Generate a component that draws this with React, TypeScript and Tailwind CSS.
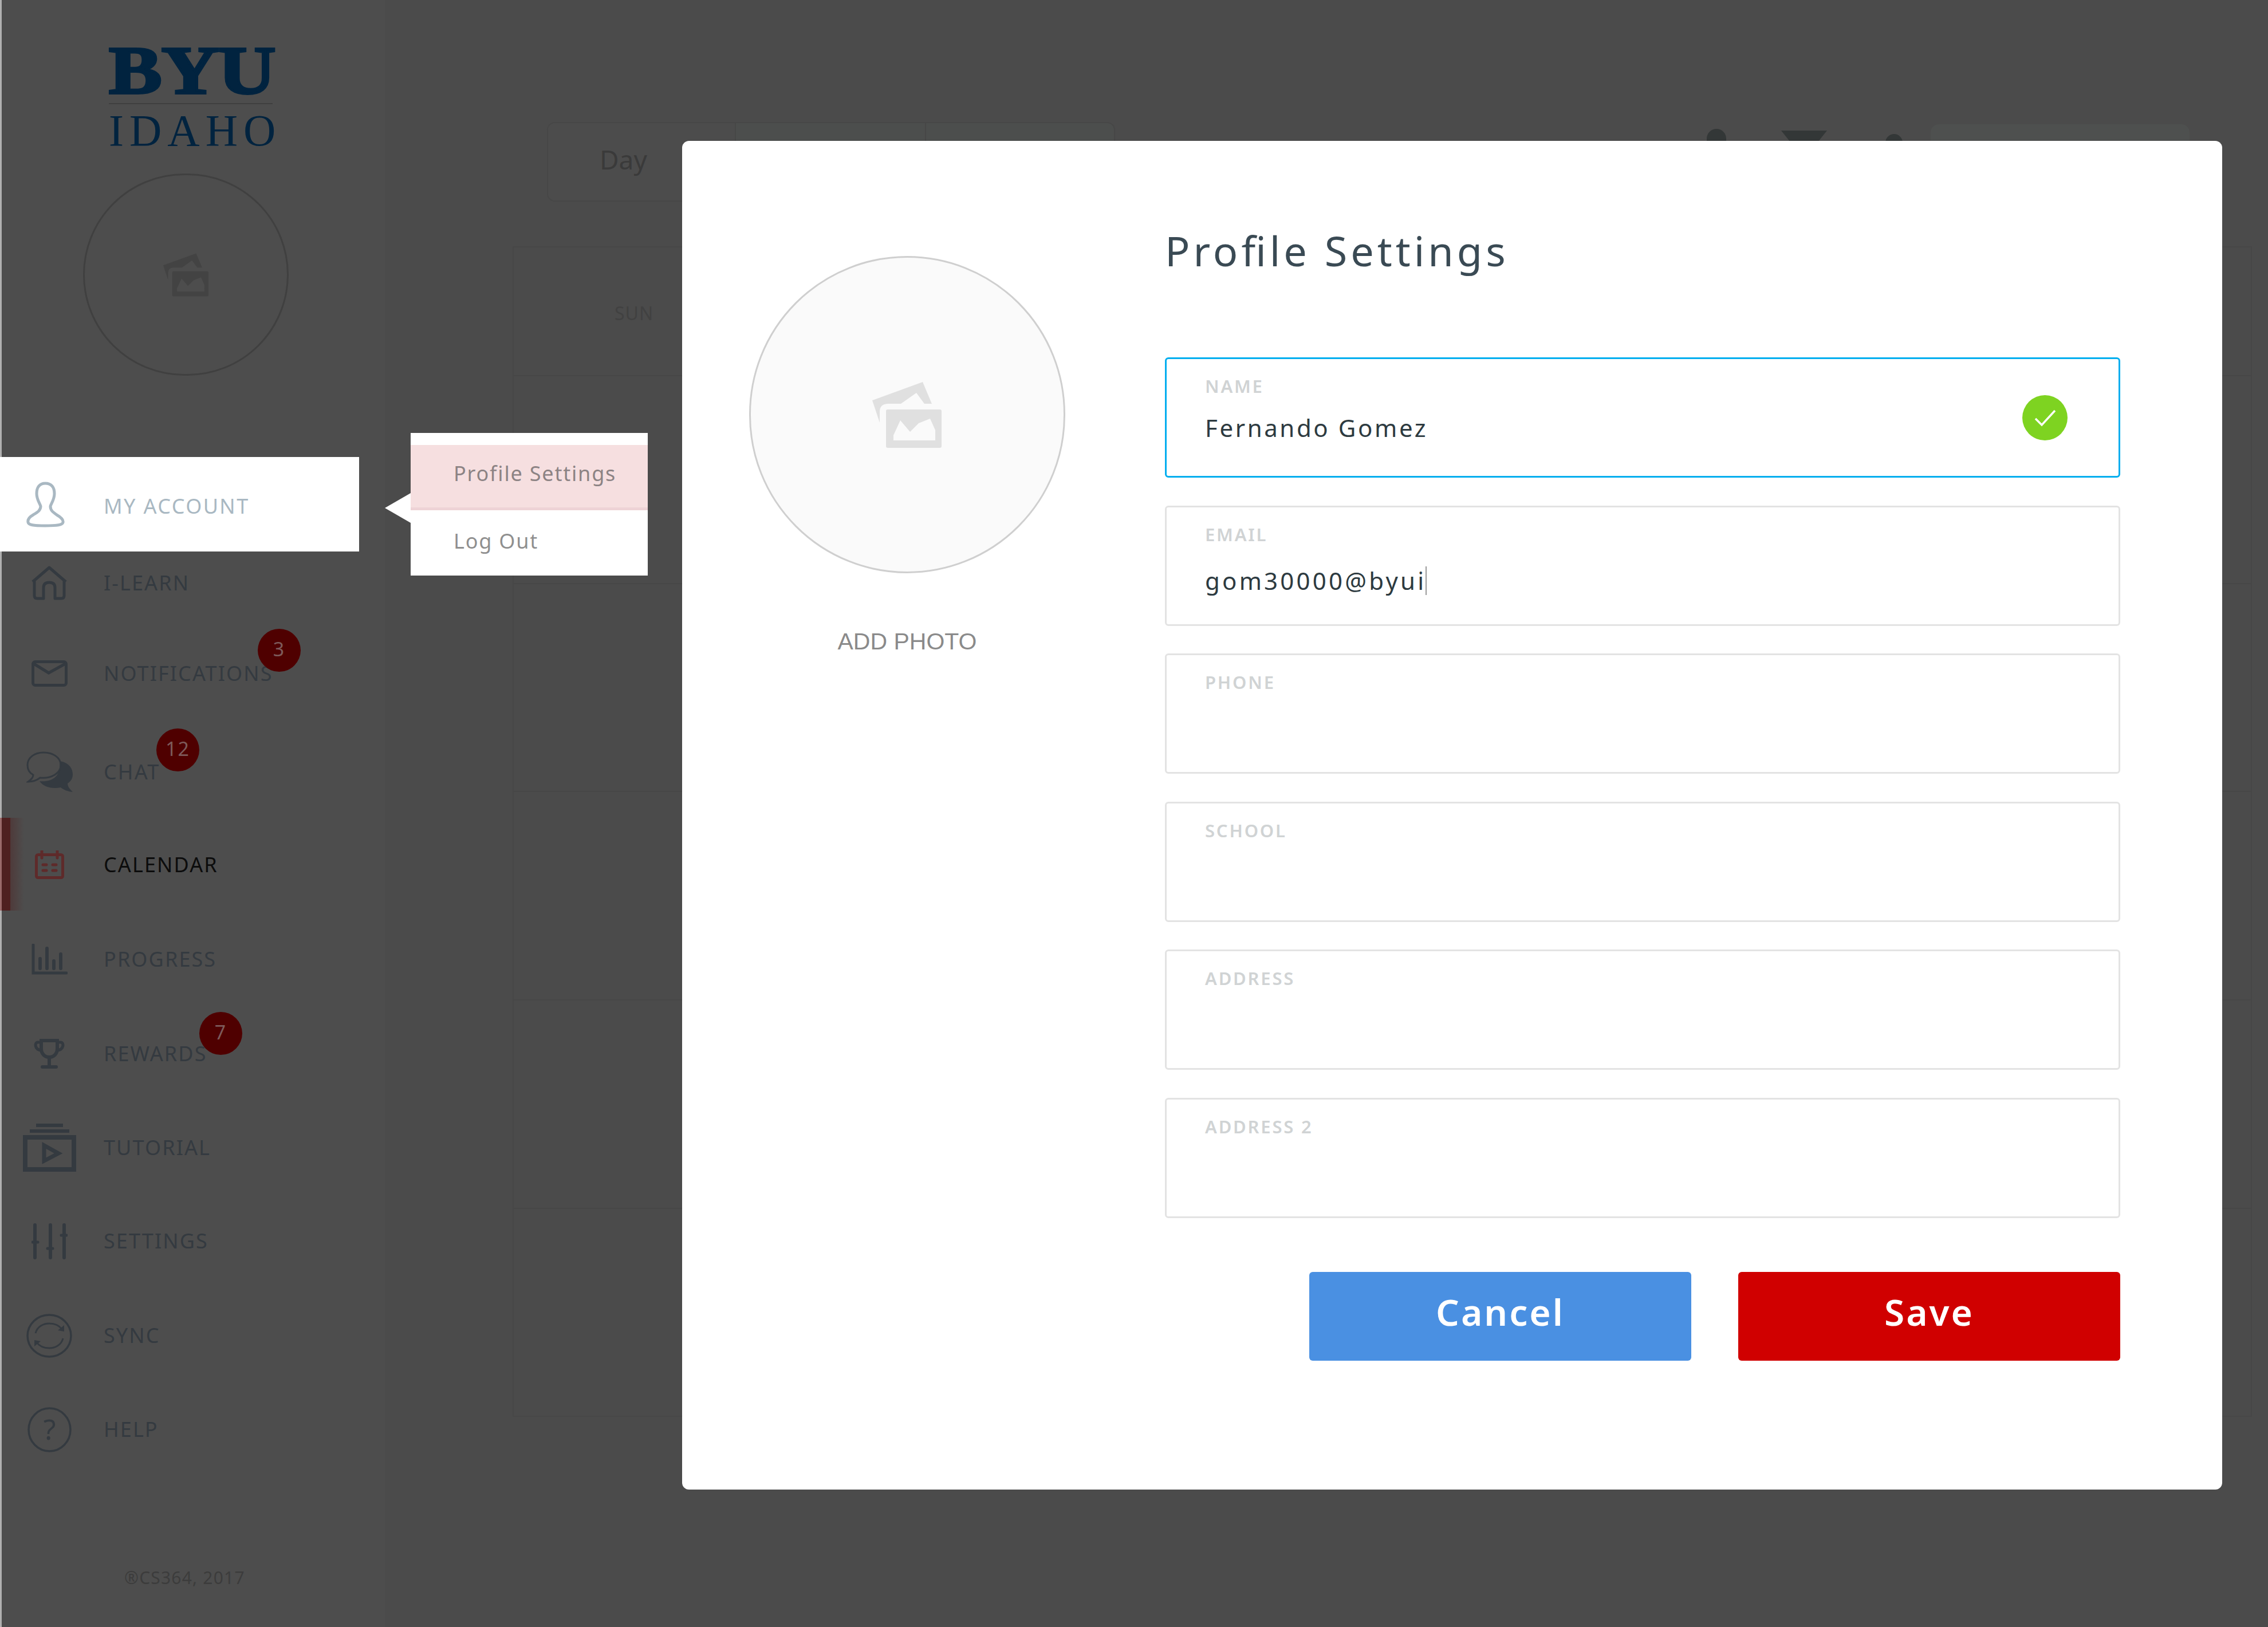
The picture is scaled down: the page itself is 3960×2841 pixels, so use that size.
import React from 'react';

const sans = "font-['Noto_Sans',sans-serif]";

const PhotoIcon: React.FC<{ className: string; hole: string }> = ({ className, hole }) => (
  <svg viewBox="0 0 121 115" className={className}>
    <path fill="currentColor" d="M0 32 L88 0 L104 38 L91 38 L77 19 L50 38 L28 38 Q13 38 13 52 L13 71 Z" />
    <rect fill="currentColor" x="24" y="48" width="97" height="67" rx="3" />
    <path fill={hole} d="M37 102 L37 93 L49 67 L66 87 L81 72 L101 64 L110 84 L110 102 Z" />
  </svg>
);

const UserIcon = () => (
  <svg viewBox="0 0 67 80" className="w-[67px] h-[80px] text-[#a9b8c2]" fill="none" stroke="currentColor" strokeWidth="5">
    <path d="M33 3 C23 3 18 10 18 21 C18 31 23 37 25 43 C25 50 20 53 12 58 C5 62 2 66 3 71 C4 76 12 77 33 77 C54 77 63 76 64 71 C65 66 60 62 53 58 C46 53 42 50 42 43 C44 37 49 31 49 21 C49 10 44 3 33 3 Z" />
  </svg>
);

const HomeIcon = () => (
  <svg viewBox="0 0 64 60" className="w-[64px] h-[60px] text-[#343a40]" fill="none" stroke="currentColor" strokeWidth="5" strokeLinejoin="round">
    <path d="M3 28 L32 3 L61 28 M6 27 L6 52 Q6 57 11 57 L22 57 L22 38 Q22 29 32 29 Q42 29 42 38 L42 57 L53 57 Q58 57 58 52 L58 27" />
  </svg>
);

const MailIcon = () => (
  <svg viewBox="0 0 63 46" className="w-[63px] h-[46px] text-[#343a40]" fill="none" stroke="currentColor" strokeWidth="5">
    <rect x="2.5" y="2.5" width="58" height="41" rx="4" />
    <path d="M4 6 L30 22 L59 6" />
  </svg>
);

const ChatIcon = () => (
  <svg viewBox="0 0 81 72" className="w-[81px] h-[72px] text-[#343a40]">
    <path fill="currentColor" d="M58 17 C72 19 81 28 81 40 C81 47 78 52 72 56 C72 61 75 65 81 71 C72 70 65 67 60 63 C44 66 30 62 23 52 C42 54 62 46 58 17 Z" />
    <path fill="none" stroke="currentColor" strokeWidth="3" d="M30 2 C14 2 2 11 2 24 C2 32 6 38 12 41 C12 45 9 49 3 53 C12 53 19 50 24 46 C44 48 60 38 60 24 C60 11 47 2 30 2 Z" />
  </svg>
);

const CalendarIcon = () => (
  <svg viewBox="0 0 51 50" className="w-[51px] h-[50px] text-[#5e2a2a]" fill="none" stroke="currentColor">
    <rect x="2.5" y="7.5" width="46" height="40" rx="3" strokeWidth="5" />
    <path d="M12 1 L12 13 M39 1 L39 13" strokeWidth="5" strokeLinecap="round" />
    <path d="M14 25 L20 25 M31 25 L37 25 M14 35 L20 35 M31 35 L37 35" strokeWidth="5" strokeLinecap="round" />
  </svg>
);

const ProgressIcon = () => (
  <svg viewBox="0 0 63 54" className="w-[63px] h-[54px] text-[#343a40]" fill="none" stroke="currentColor" strokeLinecap="round">
    <path d="M3 2 L3 51 L61 51" strokeWidth="5" />
    <path d="M15 26 L15 43 M27 8 L27 43 M39 30 L39 43 M51 18 L51 43" strokeWidth="6" />
  </svg>
);

const TrophyIcon = () => (
  <svg viewBox="0 0 56 54" className="w-[56px] h-[54px] text-[#343a40]" fill="none" stroke="currentColor">
    <path d="M14 4 L42 4 L42 18 C42 27 36 33 28 33 C20 33 14 27 14 18 Z" strokeWidth="6" />
    <path d="M14 7 L8 7 C2 7 2 20 14 21 M42 7 L48 7 C54 7 54 20 42 21" strokeWidth="5" />
    <path d="M28 33 L28 49" strokeWidth="6" />
    <path d="M16 50 L40 50" strokeWidth="6" strokeLinecap="round" />
  </svg>
);

const TutorialIcon = () => (
  <svg viewBox="0 0 93 84" className="w-[93px] h-[84px] text-[#343a40]" fill="none" stroke="currentColor">
    <path d="M23 3 L70 3 M12 13 L81 13" strokeWidth="6" />
    <rect x="4" y="24" width="85" height="56" strokeWidth="8" />
    <path d="M37 38 L62 52 L37 65 Z" strokeWidth="7" />
  </svg>
);

const SettingsIcon = () => (
  <svg viewBox="0 0 63 63" className="w-[63px] h-[63px] text-[#343a40]" fill="none" stroke="currentColor" strokeLinecap="round">
    <path d="M6 3 L6 60 M33 3 L33 60 M57 3 L57 60" strokeWidth="6" />
    <path d="M2 33 L11 33 M28 44 L37 44 M52 21 L61 21" strokeWidth="5" />
  </svg>
);

const SyncIcon = () => (
  <svg viewBox="0 0 80 77" className="w-[80px] h-[77px] text-[#343a40]" fill="none" stroke="currentColor">
    <ellipse cx="40" cy="38.5" rx="38" ry="36.5" strokeWidth="3.5" />
    <path d="M16 34 C19 22 30 17 40 17 C50 17 57 20 62 27 M64 43 C61 55 50 60 40 60 C30 60 23 57 18 50" strokeWidth="3" />
    <path fill="currentColor" stroke="none" d="M55 29 L66 20 L66 31 Z M25 48 L14 57 L14 46 Z" />
  </svg>
);

const HelpIcon = () => (
  <svg viewBox="0 0 77 79" className="w-[77px] h-[79px] text-[#343a40]" fill="none" stroke="currentColor">
    <ellipse cx="38.5" cy="39.5" rx="36.5" ry="37.5" strokeWidth="3.5" />
    <text x="38.5" y="57" textAnchor="middle" fontSize="50" fill="currentColor" stroke="none" fontFamily="'Noto Sans', sans-serif">?</text>
  </svg>
);

const Badge: React.FC<{ value: string; className: string }> = ({ value, className }) => (
  <div className={`absolute w-[75px] h-[75px] rounded-full bg-[#4f0000] text-[#7d5a5a] flex items-center justify-center pb-[4px] text-[34px] tracking-[2px] ${className}`}>
    {value}
  </div>
);

const navItems = [
  { label: 'I-LEARN', icon: <HomeIcon />, row: 'h-[110px]' },
  { label: 'NOTIFICATIONS', icon: <MailIcon />, row: 'h-[206px]', badge: '3', badgeAt: 'left-[450px] top-[25px]' },
  { label: 'CHAT', icon: <ChatIcon />, row: 'h-[138px]', badge: '12', badgeAt: 'left-[273px] top-[-7px]' },
  { label: 'CALENDAR', icon: <CalendarIcon />, row: 'h-[186px]', active: true },
  { label: 'PROGRESS', icon: <ProgressIcon />, row: 'h-[144px]' },
  { label: 'REWARDS', icon: <TrophyIcon />, row: 'h-[186px]', badge: '7', badgeAt: 'left-[348px] top-[20px]' },
  { label: 'TUTORIAL', icon: <TutorialIcon />, row: 'h-[142px]' },
  { label: 'SETTINGS', icon: <SettingsIcon />, row: 'h-[184px]' },
  { label: 'SYNC', icon: <SyncIcon />, row: 'h-[146px]' },
  { label: 'HELP', icon: <HelpIcon />, row: 'h-[182px]' },
];

const Sidebar = () => (
  <aside className={`${sans} relative w-[672px] h-full shrink-0 bg-[#4d4d4d] border-l-[3px] border-[#b0b0b0] flex flex-col`}>
    <div className="pl-[187px] pt-[73px] w-[480px] h-[303px] text-[#01233f]">
      <div className="font-['Liberation_Serif',serif] font-bold text-[119px] leading-[100px] h-[101px] tracking-[-1px] scale-x-[1.17] origin-left [-webkit-text-stroke:4px_#01233f]">BYU</div>
      <div className="w-[286px] h-[2px] bg-[#3f3f3f] mt-[6px]" />
      <div className="font-['Liberation_Serif',serif] text-[78px] leading-[72px] tracking-[10px] mt-[10px]">IDAHO</div>
    </div>
    <div className="ml-[142px] w-[359px] h-[353px] rounded-full border-[3px] border-[#404040] flex items-center justify-center">
      <PhotoIcon className="w-[79px] h-[76px] text-[#434343]" hole="#4d4d4d" />
    </div>

    <div className="relative -ml-[3px] w-[627px] h-[165px] mt-[142px] bg-white flex items-center text-[#a9b8c2] text-[36px] tracking-[2.4px] z-10">
      <div className="w-[161px] pl-[46px] shrink-0"><UserIcon /></div>
      <span className="ml-[20px] pt-[6px]">MY ACCOUNT</span>
    </div>

    <nav className="flex flex-col -ml-[3px]">
      {navItems.map((item) => (
        <div key={item.label} className={`relative flex items-center ${item.row}`}>
          {item.active && (
            <div className="absolute left-0 top-[11px] h-[162px] flex">
              <div className="w-[18px] bg-[#4f2020] border-l-[3px] border-[#9a6a6a]" />
              <div className="w-[24px] bg-gradient-to-r from-[#4e3a3a] to-[#4d4d4d]" />
            </div>
          )}
          <div className="relative w-[172px] mr-[9px] shrink-0 flex justify-center">{item.icon}</div>
          <span className={`relative text-[36px] tracking-[2.1px] ${item.active ? 'text-[#0c0c0c]' : 'text-[#343a40]'}`}>{item.label}</span>
          {item.badge && <Badge value={item.badge} className={item.badgeAt ?? ''} />}
        </div>
      ))}
    </nav>

    <div className="pl-[214px] pt-[148px] text-[30px] leading-[40px] tracking-[1.2px] text-[#3c3c3c]">®CS364, 2017</div>
  </aside>
);

const ProfileMenu = () => (
  <div className={`${sans} absolute left-[672px] top-[756px] flex items-center`}>
    <svg viewBox="0 0 45 52" className="w-[45px] h-[52px] mt-[12px]">
      <path fill="#ffffff" d="M0 26 L45 0 L45 52 Z" />
    </svg>
    <div className="w-[414px] h-[249px] bg-white pt-[21px] text-[36px] tracking-[1.8px] text-[#8f8f8f]">
      <div className="h-[114px] bg-[#f6dfe0] border-b-[5px] border-[#eed3d6] pl-[75px] flex items-center pb-[10px] text-[#8c8384]">Profile Settings</div>
      <div className="pl-[75px] pt-[29px] leading-[50px]">Log Out</div>
    </div>
  </div>
);

const Field: React.FC<{ label: string; value?: string; focused?: boolean; valid?: boolean; caret?: boolean; valueClass?: string }> = ({
  label,
  value,
  focused,
  valid,
  caret,
  valueClass,
}) => (
  <div className={`relative h-[210px] rounded-[6px] pl-[67px] pt-[31px] border-[3px] ${focused ? 'border-[#00aeef]' : 'border-[#e3e3e3]'}`}>
    <div className="text-[31px] leading-[32px] font-semibold tracking-[2.8px] text-[#d0d3d4]">{label}</div>
    {value && (
      <div className={`flex items-center text-[42px] leading-[52px] text-[#2d3a40] ${valueClass ?? ''}`}>
        {value}
        {caret && <span className="w-[2px] h-[50px] bg-[#9a9a9a] -ml-[1px]" />}
      </div>
    )}
    {valid && (
      <div className="absolute right-[89px] top-[63px] w-[79px] h-[79px] rounded-full bg-[#7ed321] flex items-center justify-center">
        <svg viewBox="0 0 40 32" className="w-[40px] h-[32px]" fill="none" stroke="#ffffff" strokeWidth="3.5">
          <path d="M3 17 L14 28 L37 3" />
        </svg>
      </div>
    )}
  </div>
);

const SettingsModal = () => (
  <div className={`${sans} absolute left-[1191px] top-[246px] w-[2689px] h-[2355px] rounded-[12px] bg-white flex`}>
    <div className="w-[843px] shrink-0 pl-[117px] pt-[201px]">
      <div className="w-[552px] flex flex-col items-center">
        <div className="w-[552px] h-[554px] rounded-full bg-[#fafafa] border-[3px] border-[#cfcfcf] flex items-center justify-center">
          <PhotoIcon className="w-[121px] h-[115px] -ml-[2px] text-[#e0e0e0]" hole="#fafafa" />
        </div>
        <div className="font-['Liberation_Sans',sans-serif] text-[41px] leading-[50px] mt-[94px] text-[#8a8a8a]">ADD PHOTO</div>
      </div>
    </div>

    <div className="w-[1668px] pt-[141px]">
      <h1 className="text-[72px] leading-[100px] tracking-[6px] text-[#3a4a54] [font-feature-settings:'liga'] font-normal mb-[137px]">Profile Settings</h1>
      <div className="flex flex-col gap-[48.6px]">
        <Field label="NAME" value="Fernando Gomez" focused valid valueClass="mt-[31px] tracking-[3.6px]" />
        <Field label="EMAIL" value="gom30000@byui" caret valueClass="mt-[39px] tracking-[4.2px]" />
        <Field label="PHONE" />
        <Field label="SCHOOL" />
        <Field label="ADDRESS" />
        <Field label="ADDRESS 2" />
      </div>
      <div className="flex justify-end gap-[82px] mt-[94px]">
        <button className="w-[667px] h-[155px] rounded-[6px] bg-[#4a90e2] text-white text-[64px] font-semibold tracking-[3px] pb-[14px]">Cancel</button>
        <button className="w-[667px] h-[155px] rounded-[6px] bg-[#d00000] text-white text-[64px] font-semibold tracking-[3px] pb-[14px]">Save</button>
      </div>
    </div>
  </div>
);

const CalendarBackdrop = () => (
  <main className={`${sans} flex-1 pl-[223px] pt-[213px] text-[#3a3a3a]`}>
    <div className="flex items-start ml-[60px]">
      <div className="w-[992px] h-[139px] rounded-[14px] border-2 border-[#474747] bg-[#4c4e4d] flex text-[46px] overflow-hidden">
        <div className="w-[328px] pl-[90px] pt-[33px] leading-[60px] bg-[#4c4c4c] border-r-2 border-[#474747]">Day</div>
        <div className="w-[332px] border-r-2 border-[#474747]" />
      </div>
      <div className="flex items-start ml-[1033px] pt-[12px]">
        <div className="w-[34px] h-[40px] rounded-t-full bg-[#333737]" />
        <div className="w-[80px] h-[30px] ml-[96px] mt-[3px] bg-[#333737] [clip-path:polygon(0_0,100%_0,70%_100%,30%_100%)]" />
        <div className="w-[30px] h-[20px] ml-[102px] mt-[9px] rounded-t-full bg-[#333737]" />
      </div>
      <div className="w-[452px] h-[135px] ml-[49px] mt-[4px] rounded-[14px] bg-[#4e504f]" />
    </div>
    <div className="mt-[78px] w-[3037px] border-2 border-[#474747]">
      <div className="h-[225px] border-b-2 border-[#474747] pl-[176px] pt-[95px] text-[32px] leading-[40px] tracking-[1px] text-[#414141]">SUN</div>
      <div className="h-[363px] border-b-2 border-[#474747]" />
      <div className="h-[363px] border-b-2 border-[#474747]" />
      <div className="h-[364px] border-b-2 border-[#474747]" />
      <div className="h-[364px] border-b-2 border-[#474747]" />
      <div className="h-[361px]" />
    </div>
  </main>
);

export default function App() {
  return (
    <div className="relative w-[3960px] h-[2841px] overflow-hidden flex bg-[#4b4b4b]">
      <Sidebar />
      <CalendarBackdrop />
      <ProfileMenu />
      <SettingsModal />
    </div>
  );
}
